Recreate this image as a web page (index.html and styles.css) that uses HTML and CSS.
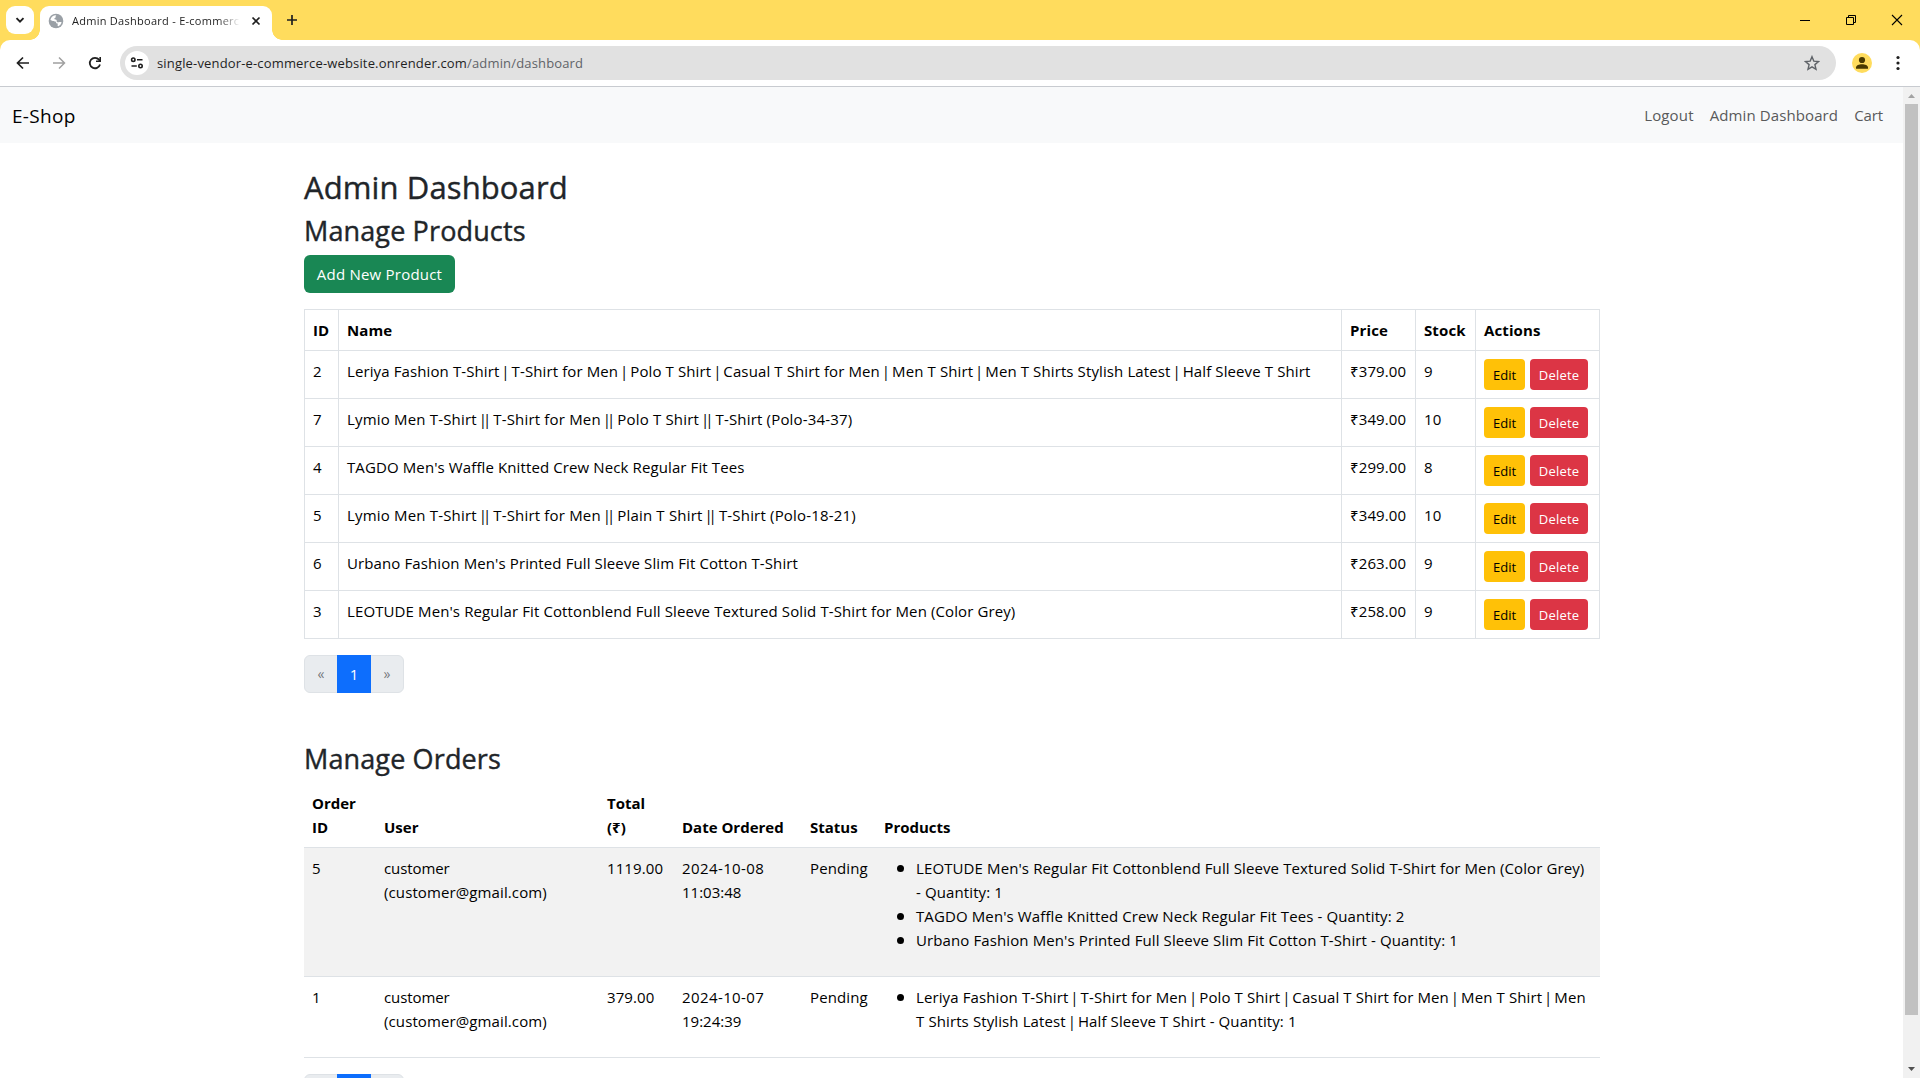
FILE: index.html
```html
<!DOCTYPE html>
<html lang="en">
<head>
<meta charset="utf-8">
<title>Admin Dashboard - E-commerce</title>
<link rel="stylesheet" href="styles.css">
</head>
<body>
<div class="browser">
  <header class="tabstrip">
    <div class="tab-search"><svg width="10" height="10" viewBox="0 0 10 10"><path d="M1.500 3.200 5 6.700 8.500 3.200" fill="none" stroke="#1f1f1f" stroke-width="1.900"/></svg></div>
    <div class="tab">
      <svg class="favicon" width="16" height="16" viewBox="0 0 16 16"><circle cx="8" cy="8" r="7.300" fill="#9aa0a6"/><path d="M8.300 2.300C5.200 2.200 2.900 4.200 2.400 7l2.300.9c.9.300 2.200.2 2.900.7.700.5.300 1.300.8 1.700.4.300 1-.1 1.300.3.300.5-.2 1.200-.1 2 .1.500.4.700.8.600 1.500-.7 2.800-2.200 3.200-4-.9-.5-1.900-.3-2.700 0-.9.300-1.700.2-2.100-.5-.4-.8.200-1.300-.3-1.800-.6-.5-1.900-.1-2.200-.8-.3-.9.900-.8 1.200-1.500.3-.600-.2-1.100.800-2.300z" fill="#fff"/></svg>
      <span class="tab-title">Admin Dashboard - E-commerc</span>
      <svg class="tab-close" width="10" height="10" viewBox="0 0 10 10"><path d="M1.500 1.500l7 7M8.500 1.500l-7 7" stroke="#1f1f1f" stroke-width="1.700"/></svg>
    </div>
    <svg class="tab-new" width="12" height="12" viewBox="0 0 12 12"><path d="M6 1v10M1 6h10" stroke="#1f1f1f" stroke-width="1.700"/></svg>
    <div class="window-controls">
      <svg width="12" height="12" viewBox="0 0 12 12"><path d="M1 6.500h10" stroke="#000"/></svg>
      <svg width="12" height="12" viewBox="0 0 12 12"><path d="M1.500 3.500h7v7h-7zM3.500 3.500v-2h7v7h-2" fill="none" stroke="#000"/></svg>
      <svg width="12" height="12" viewBox="0 0 12 12"><path d="M1 1l10 10M11 1L1 11" stroke="#000" stroke-width="1.100"/></svg>
    </div>
  </header>

  <div class="toolbar">
    <div class="nav-icons">
      <svg width="14" height="14" viewBox="0 0 14 14"><path d="M13 7H2M7 1.500 1.500 7 7 12.500" fill="none" stroke="#1f1f1f" stroke-width="1.700"/></svg>
      <svg width="14" height="14" viewBox="0 0 14 14"><path d="M1 7h11M7 1.500 12.500 7 7 12.500" fill="none" stroke="#a0a0a0" stroke-width="1.500"/></svg>
      <svg width="14" height="14" viewBox="0 0 14 14"><path d="M12 8.500A5.200 5.200 0 1 1 11 3.700L12 5" fill="none" stroke="#1f1f1f" stroke-width="1.800"/><path d="M13 1v5H8V4.400H11.400V1z" fill="#1f1f1f"/></svg>
    </div>
    <div class="omnibox">
      <span class="site-info"><svg width="14" height="14" viewBox="0 0 14 14"><g fill="none" stroke="#1f1f1f" stroke-width="1.600"><circle cx="3.300" cy="3.700" r="1.700"/><path d="M7 3.700h5.500M1.500 10h5.300"/><circle cx="10.500" cy="10" r="1.700"/></g></svg></span>
      <span class="url"><span class="url-host">single-vendor-e-commerce-website.onrender.com</span>/admin/dashboard</span>
      <svg class="star" width="16" height="16" viewBox="0 0 16 16"><path d="M8 1.700l1.800 4.400 4.700.4-3.600 3.100 1.100 4.700L8 11.800l-4 2.500 1.100-4.700L1.500 6.500l4.700-.4z" fill="none" stroke="#5f6368" stroke-width="1.400"/></svg>
    </div>
    <span class="avatar"><svg width="20" height="20" viewBox="0 0 20 20"><circle cx="10" cy="7" r="3.100" fill="#4a3a00"/><path d="M4 15.800v-1.200c0-2.300 3-3.400 6-3.400s6 1.100 6 3.400v1.200z" fill="#4a3a00"/></svg></span>
    <svg class="menu" width="4" height="16" viewBox="0 0 4 16"><g fill="#1f1f1f"><circle cx="2" cy="2.500" r="1.600"/><circle cx="2" cy="8" r="1.600"/><circle cx="2" cy="13.500" r="1.600"/></g></svg>
  </div>

  <div class="viewport">
    <div class="page">
      <nav class="navbar">
        <a class="brand">E-Shop</a>
        <div class="links"><a class="link-logout">Logout</a><a>Admin Dashboard</a><a class="link-cart">Cart</a></div>
      </nav>
      <main class="container">
        <h2>Admin Dashboard</h2>
        <h3>Manage Products</h3>
        <a class="btn btn-success">Add New Product</a>
        <table class="products">
          <colgroup><col class="p-id"><col class="p-name"><col class="p-price"><col class="p-stock"><col class="p-actions"></colgroup>
          <thead><tr><th>ID</th><th>Name</th><th>Price</th><th>Stock</th><th>Actions</th></tr></thead>
          <tbody>
            <tr><td>2</td><td>Leriya Fashion T-Shirt <i class="bar">|</i> T-Shirt for Men <i class="bar">|</i> Polo T Shirt <i class="bar">|</i> Casual T Shirt for Men <i class="bar">|</i> Men T Shirt <i class="bar">|</i> Men T Shirts Stylish Latest <i class="bar">|</i> Half Sleeve T Shirt</td><td>₹379.00</td><td>9</td><td><span class="actions"><a class="btn btn-sm btn-warning">Edit</a><a class="btn btn-sm btn-danger">Delete</a></span></td></tr>
            <tr><td>7</td><td class="loose">Lymio Men T-Shirt <i class="bar">||</i> T-Shirt for Men <i class="bar">||</i> Polo T Shirt <i class="bar">||</i> T-Shirt (Polo-34-37)</td><td>₹349.00</td><td>10</td><td><span class="actions"><a class="btn btn-sm btn-warning">Edit</a><a class="btn btn-sm btn-danger">Delete</a></span></td></tr>
            <tr><td>4</td><td>TAGDO Men's Waffle Knitted Crew Neck Regular Fit Tees</td><td>₹299.00</td><td>8</td><td><span class="actions"><a class="btn btn-sm btn-warning">Edit</a><a class="btn btn-sm btn-danger">Delete</a></span></td></tr>
            <tr><td>5</td><td class="loose">Lymio Men T-Shirt <i class="bar">||</i> T-Shirt for Men <i class="bar">||</i> Plain T Shirt <i class="bar">||</i> T-Shirt (Polo-18-21)</td><td>₹349.00</td><td>10</td><td><span class="actions"><a class="btn btn-sm btn-warning">Edit</a><a class="btn btn-sm btn-danger">Delete</a></span></td></tr>
            <tr><td>6</td><td>Urbano Fashion Men's Printed Full Sleeve Slim Fit Cotton T-Shirt</td><td>₹263.00</td><td>9</td><td><span class="actions"><a class="btn btn-sm btn-warning">Edit</a><a class="btn btn-sm btn-danger">Delete</a></span></td></tr>
            <tr><td>3</td><td>LEOTUDE Men's Regular Fit Cottonblend Full Sleeve Textured Solid T-Shirt for Men (Color Grey)</td><td>₹258.00</td><td>9</td><td><span class="actions"><a class="btn btn-sm btn-warning">Edit</a><a class="btn btn-sm btn-danger">Delete</a></span></td></tr>
          </tbody>
        </table>
        <div class="pagination"><span>«</span><span class="active">1</span><span>»</span></div>

        <h3 class="orders-title">Manage Orders</h3>
        <table class="orders">
          <colgroup><col class="o-id"><col class="o-user"><col class="o-total"><col class="o-date"><col class="o-status"><col></colgroup>
          <thead><tr><th>Order<br>ID</th><th>User</th><th>Total<br>(₹)</th><th>Date Ordered</th><th>Status</th><th>Products</th></tr></thead>
          <tbody>
            <tr class="striped"><td>5</td><td><span class="name">customer</span><br>(customer@gmail.com)</td><td>1119.00</td><td><span class="date">2024-10-08</span><br><span class="time">11:03:48</span></td><td>Pending</td>
              <td><ul>
                <li>LEOTUDE Men's Regular Fit Cottonblend Full Sleeve Textured Solid T-Shirt for Men (Color Grey)<br>- Quantity: 1</li>
                <li>TAGDO Men's Waffle Knitted Crew Neck Regular Fit Tees - Quantity: 2</li>
                <li>Urbano Fashion Men's Printed Full Sleeve Slim Fit Cotton T-Shirt - Quantity: 1</li>
              </ul></td></tr>
            <tr><td>1</td><td><span class="name">customer</span><br>(customer@gmail.com)</td><td>379.00</td><td><span class="date">2024-10-07</span><br><span class="time">19:24:39</span></td><td>Pending</td>
              <td><ul>
                <li>Leriya Fashion T-Shirt <i class="bar">|</i> T-Shirt for Men <i class="bar">|</i> Polo T Shirt <i class="bar">|</i> Casual T Shirt for Men <i class="bar">|</i> Men T Shirt <i class="bar">|</i> Men<br>T Shirts Stylish Latest <i class="bar">|</i> Half Sleeve T Shirt - Quantity: 1</li>
              </ul></td></tr>
          </tbody>
        </table>
        <div class="pagination"><span></span><span class="active"></span><span></span></div>
      </main>
    </div>
    <div class="scrollbar">
      <svg width="17" height="17" viewBox="0 0 17 17"><path d="M5 11h7L8.500 7z" fill="#a3a3a3"/></svg>
      <div class="thumb"></div>
      <svg class="scroll-down" width="17" height="17" viewBox="0 0 17 17"><path d="M5 6h7l-3.500 4z" fill="#505050"/></svg>
    </div>
  </div>
</div>
</body>
</html>
```
FILE: styles.css
```css
* { box-sizing: border-box; }
body { margin: 0; background: #fff; overflow: hidden; font: 15px/24px "Open Sans", "Noto Sans", sans-serif; letter-spacing: .11px; color: #000; }
svg { display: block; flex: none; }
.browser { height: 1078px; display: flex; flex-direction: column; background: #ffdc5d; overflow: hidden; }

/* Tab strip */
.tabstrip { height: 40px; flex: none; display: flex; align-items: flex-start; padding: 6px 17px 0 6px; }
.tab-search { width: 28px; height: 28px; border-radius: 9px; background: #fff; display: grid; place-items: center; }
.tab { position: relative; width: 232px; height: 34px; margin-left: 6px; padding: 0 11px 5px 8px; display: flex; align-items: center; background: #fff; border-radius: 9px 9px 0 0; }
.tab::before, .tab::after { content: ""; position: absolute; bottom: 0; width: 10px; height: 10px; }
.tab::before { left: -10px; background: radial-gradient(circle at 0 0, transparent 9.500px, #fff 10px); }
.tab::after { right: -10px; background: radial-gradient(circle at 100% 0, transparent 9.500px, #fff 10px); }
.tab-title { width: 170px; margin-left: 8px; white-space: nowrap; font-size: 11px; letter-spacing: .27px; color: #1f1f1f; -webkit-mask-image: linear-gradient(90deg, #000 86%, transparent 99%); mask-image: linear-gradient(90deg, #000 86%, transparent 99%); }
.tab-close { margin-left: auto; }
.tab-new { margin: 8px 0 0 14px; }
.window-controls { margin: 8px 0 0 auto; display: flex; gap: 34px; }

/* Toolbar */
.toolbar { height: 47px; flex: none; display: flex; align-items: center; padding: 0 20px 1px 16px; background: #fff; border-bottom: 1px solid #c8cbd0; border-radius: 10px 10px 0 0; }
.nav-icons { display: flex; gap: 22px; width: 104px; }
.omnibox { width: 1716px; height: 34px; display: flex; align-items: center; padding: 0 16px 0 5px; border-radius: 17px; background: #e1e1e1; }
.site-info { width: 24px; height: 24px; border-radius: 50%; background: #fff; display: grid; place-items: center; }
.url { margin-left: 8px; font-size: 13px; letter-spacing: .16px; color: #5f6368; }
.url-host { color: #1f1f1f; }
.star { margin-left: auto; }
.avatar { width: 20px; height: 20px; margin-left: 16px; border-radius: 50%; background: #ffdc5d; overflow: hidden; }
.menu { margin-left: auto; }

/* Page */
.viewport { flex: 1; min-height: 0; display: flex; background: #fff; }
.page { flex: 1; overflow: hidden; }
.navbar { height: 56px; padding: 0 20px 0 12px; display: flex; align-items: center; justify-content: space-between; background: #f8f9fa; }
.brand { padding-top: 2px; font-size: 19px; letter-spacing: .3px; }
.links { display: flex; gap: 16px; color: #595a5b; }
.link-logout { letter-spacing: .15px; }
.link-cart { letter-spacing: -.1px; }
.container { width: 1296px; margin: 24px 0 0 304px; }
h2, h3 { margin: 0 0 7px; padding-top: 1px; font-weight: 500; color: #212529; -webkit-text-stroke: .4px #212529; }
h2 { font-size: 31px; line-height: 38.400px; }
h3 { font-size: 27px; line-height: 33.600px; letter-spacing: .13px; }
.btn { display: inline-block; border-radius: 6px; }
.btn-success { display: block; width: 151px; height: 38px; padding: 7px 0; text-align: center; color: #fff; background: #198754; letter-spacing: .22px; }
.btn-sm { height: 31px; line-height: 21px; padding: 6px 0 4px; border-radius: 4px; font-size: 13px; text-align: center; letter-spacing: .2px; }
.btn-warning { width: 41px; background: #ffc107; letter-spacing: 0; }
.btn-danger { width: 58px; background: #dc3545; color: #fff; }
.actions { display: flex; gap: 5px; }

table { width: 100%; table-layout: fixed; border-spacing: 0; white-space: nowrap; }
th, td { padding: 8px; text-align: left; vertical-align: top; }
th { font-weight: 700; vertical-align: bottom; }
.bar { font-style: normal; margin-left: -2.100px; margin-right: 2.100px; letter-spacing: -4.100px; }
.loose { letter-spacing: .18px; }

.products { margin: 16px 0; border: solid #dee2e6; border-width: 1px 0 0 1px; }
.products th, .products td { border: solid #dee2e6; border-width: 0 1px 1px 0; }
.products th { height: 41px; }
.products td { height: 48px; }
.p-id { width: 34px; }
.p-name { width: 1003px; }
.p-price { width: 74px; }
.p-stock { width: 60px; }
.p-actions { width: 124px; }

.pagination { display: flex; width: 100px; height: 38px; border-radius: 6px; background: #e9ecef; border: 1px solid #dee2e6; color: rgba(33, 37, 41, .6); }
.pagination span { flex: 1; padding-top: 6px; text-align: center; font-size: 14px; }
.pagination .active { flex: 0 0 34px; margin: -1px 0; padding-top: 7px; font-size: 15px; background: #0d6efd; color: #fff; }

.orders-title { margin-top: 48px; }
.orders { margin-bottom: 16px; }
.orders th { letter-spacing: 0; }
.orders th, .orders td { border-bottom: 1px solid #dee2e6; }
.orders .striped td { background: #f2f2f2; }
.o-id { width: 72px; }
.o-user { width: 223px; }
.o-total { width: 75px; }
.o-date { width: 128px; }
.o-status { width: 74px; }
.name { letter-spacing: -.1px; }
.date { letter-spacing: .4px; }
.time { letter-spacing: 0; }
ul { margin: 0 0 16px; padding-left: 32px; list-style: none; }
li::before { content: ""; display: inline-block; width: 7px; height: 7px; margin: 0 12px 0 -19px; vertical-align: 2px; border-radius: 50%; background: #000; }

/* Scrollbar */
.scrollbar { width: 17px; flex: none; display: flex; flex-direction: column; background: #f1f1f1; }
.thumb { width: 13px; height: 911px; margin: 0 2px; background: #c1c1c1; }
.scroll-down { margin-top: auto; }
```
